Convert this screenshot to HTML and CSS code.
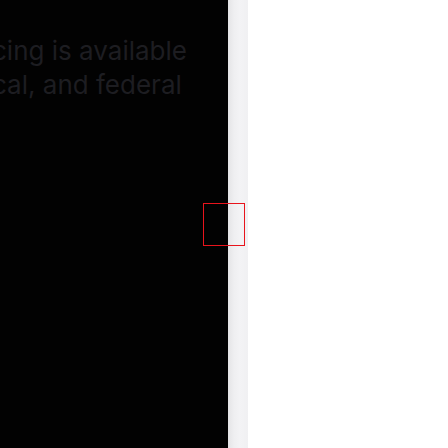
FILE: index.html
```html
<!DOCTYPE html>
<html>
<head>
<meta charset="utf-8">
<link rel="stylesheet" href="styles.css">
</head>
<body>
<div class="page">
  <div class="dark">
    <h2 class="heading">
      <span class="line line-1">cing is available</span>
      <span class="line line-2">cal, and federal</span>
    </h2>
  </div>
  <div class="track"></div>
  <div class="light"></div>
  <div class="highlight"></div>
</div>
</body>
</html>
```
FILE: styles.css
```css
html, body {
  margin: 0;
  padding: 0;
  width: 448px;
  height: 448px;
  overflow: hidden;
  background: #ffffff;
}

.page {
  position: relative;
  display: flex;
  width: 448px;
  height: 448px;
}

.dark {
  width: 228px;
  height: 100%;
  background: #020202;
  overflow: hidden;
}

.heading {
  margin: 0;
  padding-top: 34px;
  font-family: Inter, "Noto Sans", sans-serif;
  font-weight: 400;
  font-size: 26px;
  line-height: 34px;
  color: #1d1d21;
  white-space: nowrap;
}

.line {
  display: block;
}

.line-1 {
  margin-left: -8px;
}

.line-2 {
  margin-left: -8px;
}

.track {
  width: 20px;
  height: 100%;
  background: linear-gradient(to right, #e4e4e6 0%, #efeff1 30%, #f3f3f5 60%, #f0f0f2 100%);
}

.light {
  flex: 1;
  background: #ffffff;
}

.highlight {
  position: absolute;
  left: 203px;
  top: 203px;
  width: 40px;
  height: 41px;
  border: 1px solid #e8141c;
}
```
